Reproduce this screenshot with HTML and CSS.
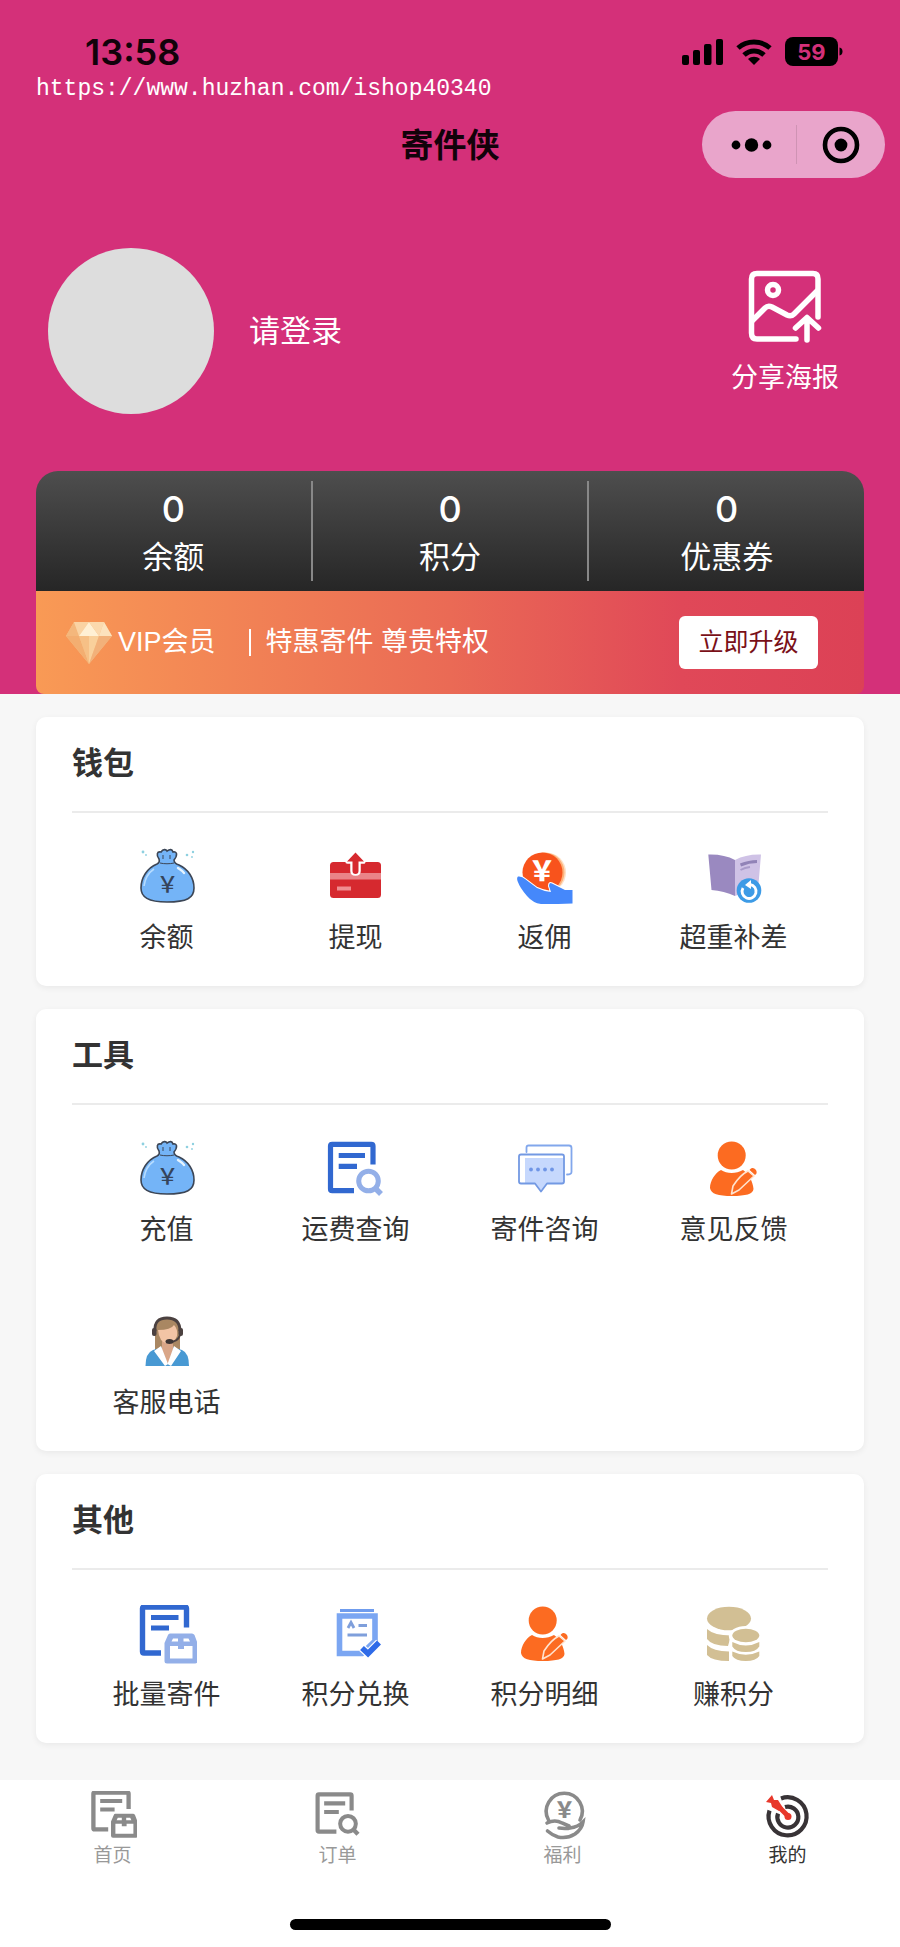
FILE: index.html
```html
<!DOCTYPE html>
<html lang="zh-CN">
<head>
  <meta charset="UTF-8">
  <meta name="viewport" content="width=device-width, initial-scale=1">
  <title>寄件侠</title>
  <link rel="stylesheet" href="styles.css">
</head>
<body>
  <!-- shared icons -->
  <svg class="sprite" aria-hidden="true">
    <symbol id="icon-bag" viewBox="0 0 60 60">
      <path d="M22 11C19 7 20 3 24 4C26 1 29 1 30 3C33 1 35 1 36 4C40 3 41 7 37 12C37 15 39 16 42 17C51 21 57 30 57 40C57 50 50 54 30 54C11 54 4 49 4 40C4 30 10 20 20 16C22 15 23 14 22 11Z" fill="#74b4f7" stroke="#3c4656" stroke-width="1.6"/>
      <path d="M23 15C27 16 33 16 37 15M26 11V7M33 11V7" fill="none" stroke="#3c4656" stroke-width="1"/>
      <path d="M41 20C44 22 46 23 47 25" fill="none" stroke="#e6f4ff" stroke-width="2.4" stroke-linecap="round"/>
      <path d="M7 38C8 31 11 25 17 21" fill="none" stroke="#b6dcff" stroke-width="1.6"/>
      <text x="30.5" y="44" text-anchor="middle" class="bag-sign">￥</text>
      <g fill="#8ed0e0"><circle cx="6" cy="4" r="1.4"/><circle cx="9" cy="7" r=".9"/><circle cx="50" cy="7" r="1.3"/><circle cx="56" cy="4" r="1.2"/><circle cx="55" cy="9" r=".9"/></g>
    </symbol>
    <symbol id="icon-user-edit" viewBox="0 0 60 60">
      <circle cx="27.7" cy="15.5" r="14" fill="#fc6b21"/>
      <path d="M17 30C23 34 32 34 39 30C45 34 49 42 49.5 49C49 54 42 56 28 56C14 56 7 54 6 48C6 41 11 33 17 30Z" fill="#fc6b21"/>
      <path d="M27.5 54L29 46Q36 35 44 31L50 36L35 50Z" fill="#fc6b21" stroke="#ffe3cf" stroke-width="1.6" stroke-linejoin="round"/>
      <path d="M45.500 30C48 27 50 28 52 30C53 32 53 34 51 35Z" fill="#fc6b21"/>
    </symbol>
    <symbol id="icon-doc-box" viewBox="0 0 60 60">
      <path d="M49.5 22.5V3.5Q49.5 2 48 2H7Q5.500 2 5.500 3.500V46.500Q5.500 48 7 48H24" fill="none" stroke="var(--doc)" stroke-width="5.4"/>
      <path d="M14 12.5H41.5M14 23H32" stroke="var(--doc)" stroke-width="5"/>
      <path fill-rule="evenodd" d="M33 28.5H55Q56.500 28.500 57.500 30L60.500 38V56Q60.500 58.500 58 58.500H30Q27.500 58.500 27.500 56V38L31 30Q31.500 28.500 33 28.500ZM36 33.500L34.500 36.500H41V33.500ZM46.500 33.500V36.500H53L51.500 33.500ZM33 41V53.500H55.500V41H47V44H41V41Z" fill="var(--part)"/>
    </symbol>
    <symbol id="icon-doc-search" viewBox="0 0 60 60">
      <path d="M47 24.5V6Q47 4.300 45.300 4.300H6.200Q4.500 4.300 4.500 6V49Q4.500 50.700 6.200 50.700H28" fill="none" stroke="var(--doc)" stroke-width="5.2"/>
      <path d="M12.7 15.5H39M12.700 26.300H31" stroke="var(--doc)" stroke-width="5.2"/>
      <circle cx="42.5" cy="41" r="9.8" fill="none" stroke="var(--part)" stroke-width="5"/>
      <path d="M49.5 48.5L55 54" stroke="var(--part)" stroke-width="5.5"/>
    </symbol>
  </svg>

  <header class="hero">
    <div class="status-bar">
      <time class="clock">13:58</time>
      <div class="status-icons">
        <svg width="41" height="28" viewBox="0 0 41 28"><g fill="#000"><rect x="0" y="17" width="7" height="10" rx="2"/><rect x="11" y="12" width="7" height="15" rx="2"/><rect x="22" y="6" width="7.5" height="21" rx="2"/><rect x="34" y="1" width="7" height="26" rx="2"/></g></svg>
        <svg width="36" height="28" viewBox="0 0 36 28"><path d="M2 10C11 2 25 2 34 10M8 17C14 11.500 22 11.500 28 17" fill="none" stroke="#000" stroke-width="5"/><path d="M18 27L12 21C15.500 18 20.500 18 24 21Z" fill="#000"/></svg>
        <svg width="58" height="30" viewBox="0 0 58 30"><rect x="0" y="0" width="53" height="29" rx="8" fill="#000"/><path d="M54.500 10.500Q57.500 11 57.500 14.500T54.500 18.500Z" fill="#000"/><text x="26.5" y="22.5" text-anchor="middle" class="battery">59</text></svg>
      </div>
    </div>
    <p class="site-url">https://www.huzhan.com/ishop40340</p>

    <div class="nav-bar">
      <h1>寄件侠</h1>
      <div class="capsule">
        <button type="button" aria-label="更多">
          <svg width="42" height="38" viewBox="0 0 42 38"><circle cx="5" cy="19" r="4.400"/><circle cx="20.5" cy="19" r="6.700"/><circle cx="36" cy="19" r="4.400"/></svg>
        </button>
        <button type="button" aria-label="关闭">
          <svg width="38" height="38" viewBox="0 0 38 38"><circle cx="19" cy="19" r="16" fill="none" stroke="#000" stroke-width="4.6"/><circle cx="19" cy="19" r="6.4"/></svg>
        </button>
      </div>
    </div>

    <div class="profile">
      <div class="avatar"></div>
      <a class="login" href="#login">请登录</a>
      <a class="share" href="#share">
        <svg width="74" height="74" viewBox="0 0 74 74" fill="none" stroke="#fff" stroke-width="5.5" stroke-linecap="round" stroke-linejoin="round">
          <path d="M70 47V9Q70 3.500 65 3.500H9Q3.500 3.500 3.500 9V63Q3.500 69 9 69H48"/>
          <circle cx="25" cy="20" r="5.5"/>
          <path d="M4 51L17 38Q20 35 24 37L39 45Q43 47 46 44L69 21"/>
          <path d="M59 70V49M47.500 58L59 47.500L70.500 58"/>
        </svg>
        <span>分享海报</span>
      </a>
    </div>

    <div class="account">
      <div class="stats">
        <a href="#balance"><strong>0</strong><span>余额</span></a>
        <a href="#points"><strong>0</strong><span>积分</span></a>
        <a href="#coupons"><strong>0</strong><span>优惠券</span></a>
      </div>
      <div class="vip">
        <svg width="48" height="44" viewBox="0 0 48 44">
          <path d="M9 1H39L47 15L24 43L1 15Z" fill="#f6bf84"/>
          <path d="M9 1L1 15H14Z" fill="#f4b77c"/><path d="M9 1H24L14 15Z" fill="#fad3a3"/><path d="M24 1L34 15H14Z" fill="#fff0d4"/><path d="M24 1H39L34 15Z" fill="#fbd9ae"/><path d="M39 1L47 15H34Z" fill="#fce2bd"/>
          <path d="M1 15H14L24 43Z" fill="#f3ae71"/><path d="M14 15H24V43Z" fill="#f6c086"/><path d="M24 15H34L24 43Z" fill="#f9d09b"/><path d="M34 15H47L24 43Z" fill="#f2b17a"/>
        </svg>
        <span class="vip-name">VIP会员</span>
        <span class="vip-desc">特惠寄件 尊贵特权</span>
        <button type="button" class="upgrade">立即升级</button>
      </div>
    </div>
  </header>

  <main>
    <section class="card">
      <h2>钱包</h2>
      <div class="grid">
        <a class="item" href="#balance"><svg><use href="#icon-bag"/></svg>余额</a>
        <a class="item" href="#withdraw">
          <svg viewBox="0 0 60 60">
            <rect x="4" y="14" width="51" height="36" rx="3.5" fill="#d6292f"/>
            <path d="M4 25H55V31.500H4Z" fill="#ea8488"/>
            <path d="M11 40.500H25" stroke="#f08d90" stroke-width="4"/>
            <path d="M29.500 5L37.500 13.500H32.500V23Q32.500 25.500 29.500 25.500T26.500 23V13.500H21.500Z" fill="#d6292f" stroke="#fff" stroke-width="4.5" stroke-linejoin="round"/>
            <path d="M29.500 4.500L38 13.500H32.500V23Q32.500 26 29.500 26T26.500 23V13.500H21Z" fill="#d6292f"/>
          </svg>提现</a>
        <a class="item" href="#rebate">
          <svg viewBox="0 0 60 60">
            <circle cx="31" cy="24.5" r="20" fill="#fee0c5"/><circle cx="29.5" cy="24.5" r="20" fill="#fdb17b"/>
            <circle cx="27.5" cy="24.5" r="20" fill="#f8531c"/>
            <text x="27" y="33" text-anchor="middle" class="coin-sign">￥</text>
            <path d="M3 28.500Q7 28 10 31L22 40Q28 43 36 44L34 38Q34 34 37 35.500L50 42H57.500V55.500L43 56H26Q18 55 12 48Q5 40 2.500 33Q1.500 29.500 3 28.500Z" fill="#4588fb" stroke="#fff" stroke-width="2" paint-order="stroke"/>
          </svg>返佣</a>
        <a class="item" href="#overweight">
          <svg viewBox="0 0 60 60">
            <path d="M4.300 6.500Q20 6 31 12V48Q20 43 7.500 42Z" fill="#9a89c0"/>
            <path d="M31 12Q42 6 57 6.500L54 42Q42 43 31 48Z" fill="#cfc2e6"/>
            <path d="M36.500 17Q45 13.500 53 13.500" fill="none" stroke="#9183b7" stroke-width="3"/>
            <path d="M36.500 22Q41 19.500 46 19" fill="none" stroke="#a99bca" stroke-width="2"/>
            <circle cx="45" cy="42.5" r="12.3" fill="#3d9be6"/>
            <path d="M39 40A7 7 0 1 0 46 36.500" fill="none" stroke="#fff" stroke-width="2.8"/><path d="M41 37L47 32V41Z" fill="#fff"/>
          </svg>超重补差</a>
      </div>
    </section>

    <section class="card">
      <h2>工具</h2>
      <div class="grid">
        <a class="item" href="#recharge"><svg><use href="#icon-bag"/></svg>充值</a>
        <a class="item" href="#freight"><svg><use href="#icon-doc-search"/></svg>运费查询</a>
        <a class="item" href="#consult">
          <svg viewBox="0 0 60 60">
            <path d="M11.500 12V7.500Q11.500 5.500 13.500 5.500H54Q56.500 5.500 56.500 8V32Q56.500 34.500 52 34.500" fill="none" stroke="#82a7ec" stroke-width="1.8" stroke-linecap="round"/>
            <path d="M10 18H49V43H32L26 50L20 43H10Z" fill="#c6d8fd"/>
            <path d="M6 14.500H47Q49 14.500 49 16.500V41.500Q49 43.500 47 43.500H32L26 51.500L20 43.500H6Q4 43.500 4 41.500V16.500Q4 14.500 6 14.500Z" fill="none" stroke="#7399e3" stroke-width="1.8" stroke-linejoin="round"/>
            <g fill="#6f95e6"><circle cx="16" cy="29.5" r="1.9"/><circle cx="23" cy="29.5" r="1.9"/><circle cx="30" cy="29.5" r="1.9"/><circle cx="37" cy="29.5" r="1.9"/></g>
          </svg>寄件咨询</a>
        <a class="item" href="#feedback"><svg><use href="#icon-user-edit"/></svg>意见反馈</a>
        <a class="item" href="tel:">
          <svg viewBox="0 0 60 60">
            <path d="M18 16Q18 5 30 5T43 16V37H18Z" fill="#a98762"/>
            <path d="M8.500 53Q8.500 40 16 37L26 34H35L45 37Q52 40 52 53Z" fill="#4899d3"/>
            <path d="M25 28H36V37L31 52L25 37Z" fill="#d9a688"/>
            <path d="M24 33L31 51L28 53L17 38ZM37 33L30.500 51L34 53L44 38Z" fill="#fff"/>
            <path d="M21 17Q34 17 37 12Q41 16 40 23Q37 31 30.500 31Q22 29 21 17Z" fill="#f2c4a5"/>
            <path d="M18 18Q17 5 30 5T43 18" fill="none" stroke="#4b4140" stroke-width="2.8"/>
            <rect x="15" y="15" width="4.500" height="8" rx="2" fill="#4b4140"/><rect x="41.500" y="15" width="4.500" height="8" rx="2" fill="#4b4140"/>
            <path d="M43 22Q41 29 32 29" fill="none" stroke="#4b4140" stroke-width="2"/><ellipse cx="32.5" cy="28.5" rx="4" ry="2.5" fill="#3d3534"/>
          </svg>客服电话</a>
      </div>
    </section>

    <section class="card">
      <h2>其他</h2>
      <div class="grid">
        <a class="item" href="#batch"><svg><use href="#icon-doc-box"/></svg>批量寄件</a>
        <a class="item" href="#exchange">
          <svg viewBox="0 0 60 60">
            <path d="M14 5.500H48" stroke="#6f9cee" stroke-width="2.8"/>
            <path d="M13.500 11H49V36L36 48.500H13.500Z" fill="none" stroke="#7ba6f2" stroke-width="5.6"/>
            <path d="M22 23L25 17.500L28 23M32.500 20.500H41M21.500 30H41" fill="none" stroke="#7f9fdb" stroke-width="2.8"/>
            <path d="M36 43L42 48.500L53 37.500" fill="none" stroke="#fff" stroke-width="8"/>
            <path d="M36 43L42 48.500L53 37.500" fill="none" stroke="#2f6be8" stroke-width="5.6"/>
          </svg>积分兑换</a>
        <a class="item" href="#points-log"><svg><use href="#icon-user-edit"/></svg>积分明细</a>
        <a class="item" href="#earn">
          <svg viewBox="0 0 60 60" fill="#d2bf94">
            <ellipse cx="25" cy="13.5" rx="22" ry="11.8"/>
            <path d="M3 24Q10 30.500 27 30.500L24 41Q8 41 3 34ZM3 40Q9 46 25 46.500V56Q8 56 3 50Z"/>
            <ellipse cx="41.8" cy="31" rx="17" ry="10" fill="#fff"/><path d="M25.500 31H60V60H28Q25.500 50 25.500 31Z" fill="#fff"/>
            <ellipse cx="41.8" cy="30.5" rx="13.5" ry="6.8"/>
            <path d="M28.300 37Q41.800 44 55.300 37V41.500Q52 47 41.800 47T28.300 41.500ZM28.300 46.500Q41.800 53 55.300 46.500V51Q52 56 41.800 56T28.300 51Z"/>
          </svg>赚积分</a>
      </div>
    </section>
  </main>

  <footer class="tab-bar">
    <nav>
      <a href="#home"><svg><use href="#icon-doc-box"/></svg>首页</a>
      <a href="#orders"><svg><use href="#icon-doc-search"/></svg>订单</a>
      <a href="#welfare">
        <svg viewBox="0 0 48 48" fill="none" stroke="#8a8a8a" stroke-width="3.6" stroke-linecap="round">
          <path d="M9.500 29A18 18 0 1 1 41 29"/>
          <text x="25.5" y="26" text-anchor="middle" class="tab-sign">￥</text>
          <path d="M8 32Q16 28 23 32L30 35Q32 38 26 37.500L20 37M31 37Q39 36 44 31Q43 38 36 43Q28 48 19 46Q13 44 8.500 40"/>
        </svg>福利</a>
      <a href="#mine" class="active">
        <svg viewBox="0 0 48 48" fill="none" stroke="#383336" stroke-width="4.2">
          <path d="M17 7.500A19 19 0 1 1 5.500 19.500"/>
          <path d="M21 16A10.500 10.500 0 1 1 14 22.500"/>
          <path d="M12 13L24 25" stroke="#e8382b" stroke-width="5"/><circle cx="24" cy="25.5" r="3.5" fill="#e8382b" stroke="none"/>
          <path d="M8 4L10 9L14 9L19 17L15 20L8 16L7 12L2 11Z" fill="#e8382b" stroke="none"/>
        </svg>我的</a>
    </nav>
    <div class="home-indicator"></div>
  </footer>
</body>
</html>
```

FILE: styles.css
```css
* { box-sizing: border-box; }
body {
  margin: 0;
  min-height: 100vh;
  display: flex;
  flex-direction: column;
  background: #f7f7f7;
  color: #333;
  font-family: Inter, "Noto Sans CJK SC", sans-serif;
}
a { color: inherit; text-decoration: none; }
button { border: 0; padding: 0; font-family: inherit; cursor: pointer; }
svg { display: block; flex-shrink: 0; overflow: visible; }
.sprite { position: absolute; width: 0; height: 0; }

/* header */
.hero { background: #d43079; color: #fff; padding: 0 36px; }
.status-bar {
  display: flex;
  justify-content: space-between;
  align-items: center;
  padding: 33px 21px 0 49px;
  color: #12020a;
}
.clock { font-size: 36px; font-weight: 600; line-height: 38px; }
.status-icons { display: flex; align-items: center; gap: 13px; }
.battery { fill: #d43079; font-size: 22px; font-weight: 700; }
.site-url {
  margin: 0;
  font-family: "Liberation Mono", monospace;
  font-size: 23px;
  line-height: 37px;
}
.nav-bar {
  display: grid;
  grid-template-columns: 1fr auto 1fr;
  align-items: center;
  margin: 3px -21px 0;
}
.nav-bar h1 {
  grid-column: 2;
  margin: 0;
  color: #12020a;
  font-size: 33px;
  font-weight: 700;
  line-height: 48px;
}
.capsule {
  justify-self: end;
  display: flex;
  width: 183px;
  height: 67px;
  padding: 14px 0;
  border-radius: 34px;
  background: #e9a5cb;
}
.capsule button {
  flex: 1;
  display: flex;
  justify-content: center;
  align-items: center;
  background: none;
}
.capsule button:first-child { padding-left: 6px; }
.capsule button + button { border-left: 1px solid #cf93b4; }

.profile { display: flex; align-items: center; padding: 70px 25px 57px 12px; }
.avatar { width: 166px; height: 166px; border-radius: 50%; background: #ddd; }
.login { margin-left: 35px; padding-bottom: 5px; font-size: 31px; }
.share {
  margin-left: auto;
  display: flex;
  flex-direction: column;
  align-items: center;
  gap: 14px;
  padding-top: 6px;
  font-size: 27px;
  line-height: 40px;
}

.stats {
  display: flex;
  padding: 10px 0;
  border-radius: 22px 22px 0 0;
  background: linear-gradient(#4e4e4e, #262626);
}
.stats a {
  flex: 1;
  display: flex;
  flex-direction: column;
  align-items: center;
  padding-bottom: 4px;
  font-size: 31px;
  line-height: 40px;
}
.stats a + a { border-left: 2px solid #888; }
.stats strong { font-size: 36px; font-weight: 500; line-height: 56px; }
.vip {
  display: flex;
  align-items: center;
  padding: 25px 46px 25px 29px;
  border-radius: 0 0 8px 8px;
  background: linear-gradient(to right, #f99a55, #ea6a55 50%, #e04858 78%, #dc4156);
  font-family: "Liberation Sans", "Noto Sans CJK SC", sans-serif;
  font-size: 27px;
  line-height: 27px;
}
.vip-name { margin-left: 5px; }
.vip-desc { margin-left: 33px; padding-left: 15px; border-left: 2px solid #fff; }
.upgrade {
  margin-left: auto;
  width: 139px;
  height: 53px;
  padding-bottom: 5px;
  border-radius: 6px;
  background: #fff;
  color: #7a1018;
  font-size: 25px;
}

/* cards */
main { display: flex; flex-direction: column; gap: 23px; padding: 23px 36px 37px; }
.card {
  padding: 0 36px;
  border-radius: 10px;
  background: #fff;
  box-shadow: 0 2px 6px rgba(0, 0, 0, 0.06);
}
.card h2 {
  margin: 0;
  padding: 23px 0 25px;
  border-bottom: 2px solid #ebebeb;
  font-size: 31px;
  font-weight: 700;
  line-height: 46px;
}
.grid { display: grid; grid-template-columns: repeat(4, 1fr); }
.item {
  --doc: #3168d0;
  --part: #93afe8;
  display: flex;
  flex-direction: column;
  align-items: center;
  gap: 10px;
  padding: 35px 0 28px;
  font-size: 27px;
  line-height: 40px;
}
.item svg { width: 60px; height: 60px; }
.bag-sign { fill: #35445a; font-family: "Noto Sans CJK SC", sans-serif; font-size: 22px; font-weight: 500; }
.coin-sign { fill: #fff; font-family: "Noto Sans CJK SC", sans-serif; font-size: 27px; font-weight: 900; }

/* tab bar */
.tab-bar { margin-top: auto; padding: 11px 0 17px; background: #fff; }
.tab-bar nav { display: grid; grid-template-columns: repeat(4, 1fr); }
.tab-bar a {
  --doc: #8a8a8a;
  --part: #8a8a8a;
  display: flex;
  flex-direction: column;
  align-items: center;
  gap: 3px;
  color: #999;
  font-size: 19px;
  line-height: 28px;
}
.tab-bar .active { color: #333; }
.tab-bar svg { width: 48px; height: 48px; }
.tab-sign { fill: #8a8a8a; stroke: none; font-family: "Noto Sans CJK SC", sans-serif; font-size: 21px; font-weight: 900; }
.home-indicator {
  width: 321px;
  height: 11px;
  margin: 49px auto 0;
  border-radius: 6px;
  background: #000;
}
```
